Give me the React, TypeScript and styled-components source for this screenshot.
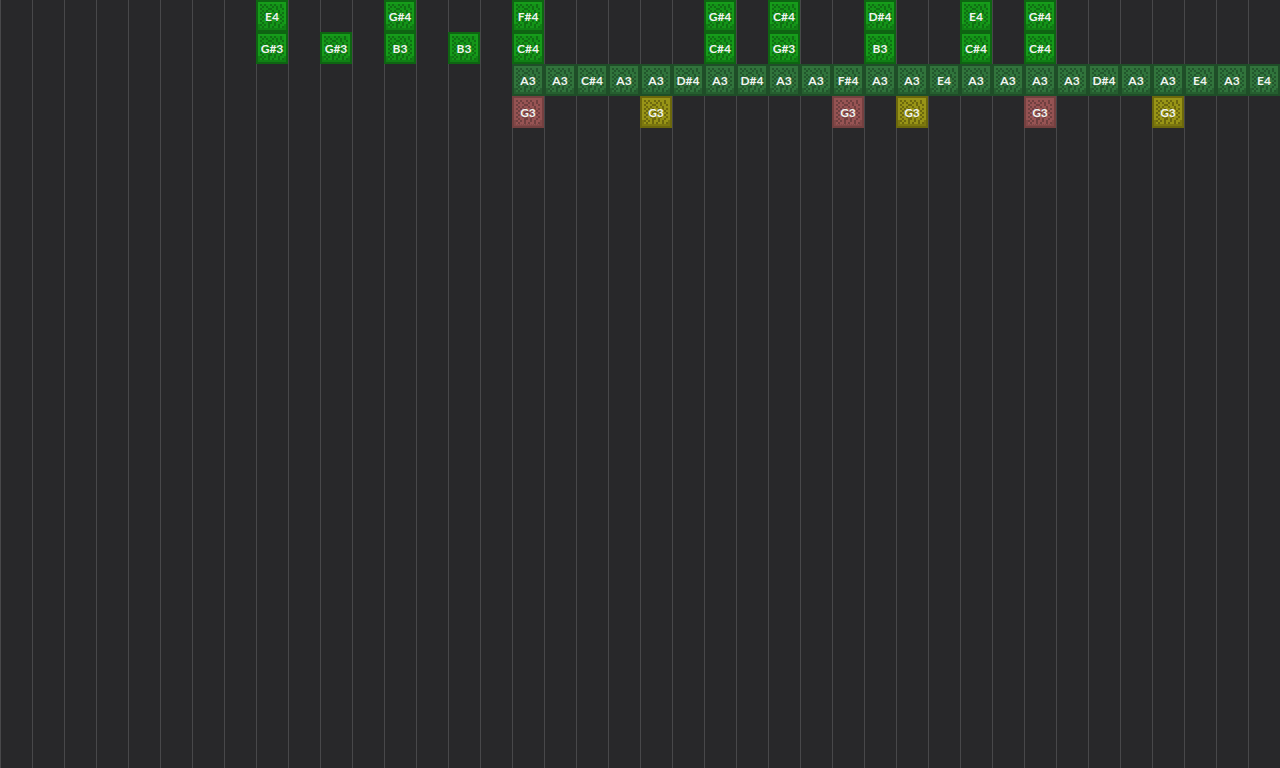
import React from 'react';
import styled, { createGlobalStyle } from 'styled-components';

const GlobalStyle = createGlobalStyle`
  html, body, #root { height: 100%; }
  body { margin: 0; overflow: hidden; background: #28282a; }
`;

type Kind = 'harp' | 'bass' | 'snare' | 'hat';

/* border, face, shaded texel, light rim, lower rim */
const palettes: Record<Kind, [string, string, string, string, string]> = {
  harp: ['#0e6412', '#149418', '#0f7013', '#169c1a', '#108014'],
  bass: ['#1f4e28', '#30743c', '#22562c', '#32743c', '#265f30'],
  snare: ['#744040', '#985454', '#704040', '#945252', '#824848'],
  hat: ['#6c680c', '#989416', '#6c680e', '#989418', '#7c780e'],
};

/* 16x16 face: d border, m face, s shade, l light rim, b lower rim */
const face = [
  'dddddddddddddddd',
  'dlllllllllllllld',
  'dlsmsmmsmsmmsmld',
  'dlmsmsmmsmsmsmld',
  'dlsmmmssmmsmmsld',
  'dlmsmsmmsmmsmmld',
  'dlsmsmsmmsmsmsld',
  'dlmsmmmsmsmmsmld',
  'dlsmsmsmsmsmmsld',
  'dlmsmsmmsmsmsmld',
  'dlsmmsmsmmsmmsld',
  'dlmsmmssmsmmsmld',
  'dbsmsmsmmsmsmmbd',
  'dbmsmmsmsmmsmsbd',
  'dbbbbbbbbbbbbbbd',
  'dddddddddddddddd',
];

const Board = styled.main`
  min-height: 100%;
  box-sizing: border-box;
  background: repeating-linear-gradient(to right, #48484a 0 1px, #28282a 1px 32px);
`;

const Layer = styled.div`
  display: grid;
  grid-template-columns: repeat(40, 32px);
  height: 32px;
`;

const Block = styled.div<{ $column: number }>`
  display: grid;
  grid-column: ${(p) => p.$column + 1};
  grid-row: 1;
  place-items: center;
  > * { grid-area: 1 / 1; }
`;

const Texture = styled.svg`
  display: block;
  width: 32px;
  height: 32px;
`;

const Key = styled.span`
  padding-top: 2px;
  color: #f0f4f0;
  font: 700 12px/16px Lato, sans-serif;
`;

type Note = [number, string, Kind];

const bassKeys = 'A3 A3 C#4 A3 A3 D#4 A3 D#4 A3 A3 F#4 A3 A3 E4 A3 A3 A3 A3 D#4 A3 A3 E4 A3 E4'.split(' ');

const harp = (column: number, key: string): Note => [column, key, 'harp'];

const layers: Note[][] = [
  [harp(8, 'E4'), harp(12, 'G#4'), harp(16, 'F#4'), harp(22, 'G#4'), harp(24, 'C#4'), harp(27, 'D#4'), harp(30, 'E4'), harp(32, 'G#4')],
  [harp(8, 'G#3'), harp(10, 'G#3'), harp(12, 'B3'), harp(14, 'B3'), harp(16, 'C#4'), harp(22, 'C#4'), harp(24, 'G#3'), harp(27, 'B3'), harp(30, 'C#4'), harp(32, 'C#4')],
  bassKeys.map((key, i): Note => [16 + i, key, 'bass']),
  [[16, 'G3', 'snare'], [20, 'G3', 'hat'], [26, 'G3', 'snare'], [28, 'G3', 'hat'], [32, 'G3', 'snare'], [36, 'G3', 'hat']],
];

function NoteBlock({ column, label, kind }: { column: number; label: string; kind: Kind }) {
  const colors = palettes[kind];
  return (
    <Block $column={column}>
      <Texture viewBox="0 0 16 16" shapeRendering="crispEdges" aria-hidden="true">
        {face.flatMap((line, y) =>
          line.split('').map((c, x) => (
            <rect key={`${x}-${y}`} x={x} y={y} width="1" height="1" fill={colors['dmslb'.indexOf(c)]} />
          )),
        )}
        {kind === 'snare' && (
          <path d="M2 14.25H14" stroke={colors[3]} strokeWidth=".5" strokeDasharray=".5 .5" />
        )}
      </Texture>
      <Key>{label}</Key>
    </Block>
  );
}

export default function App() {
  return (
    <>
      <GlobalStyle />
      <Board>
        {layers.map((notes, i) => (
          <Layer key={i}>
            {notes.map(([column, label, kind]) => (
              <NoteBlock key={column} column={column} label={label} kind={kind} />
            ))}
          </Layer>
        ))}
      </Board>
    </>
  );
}
